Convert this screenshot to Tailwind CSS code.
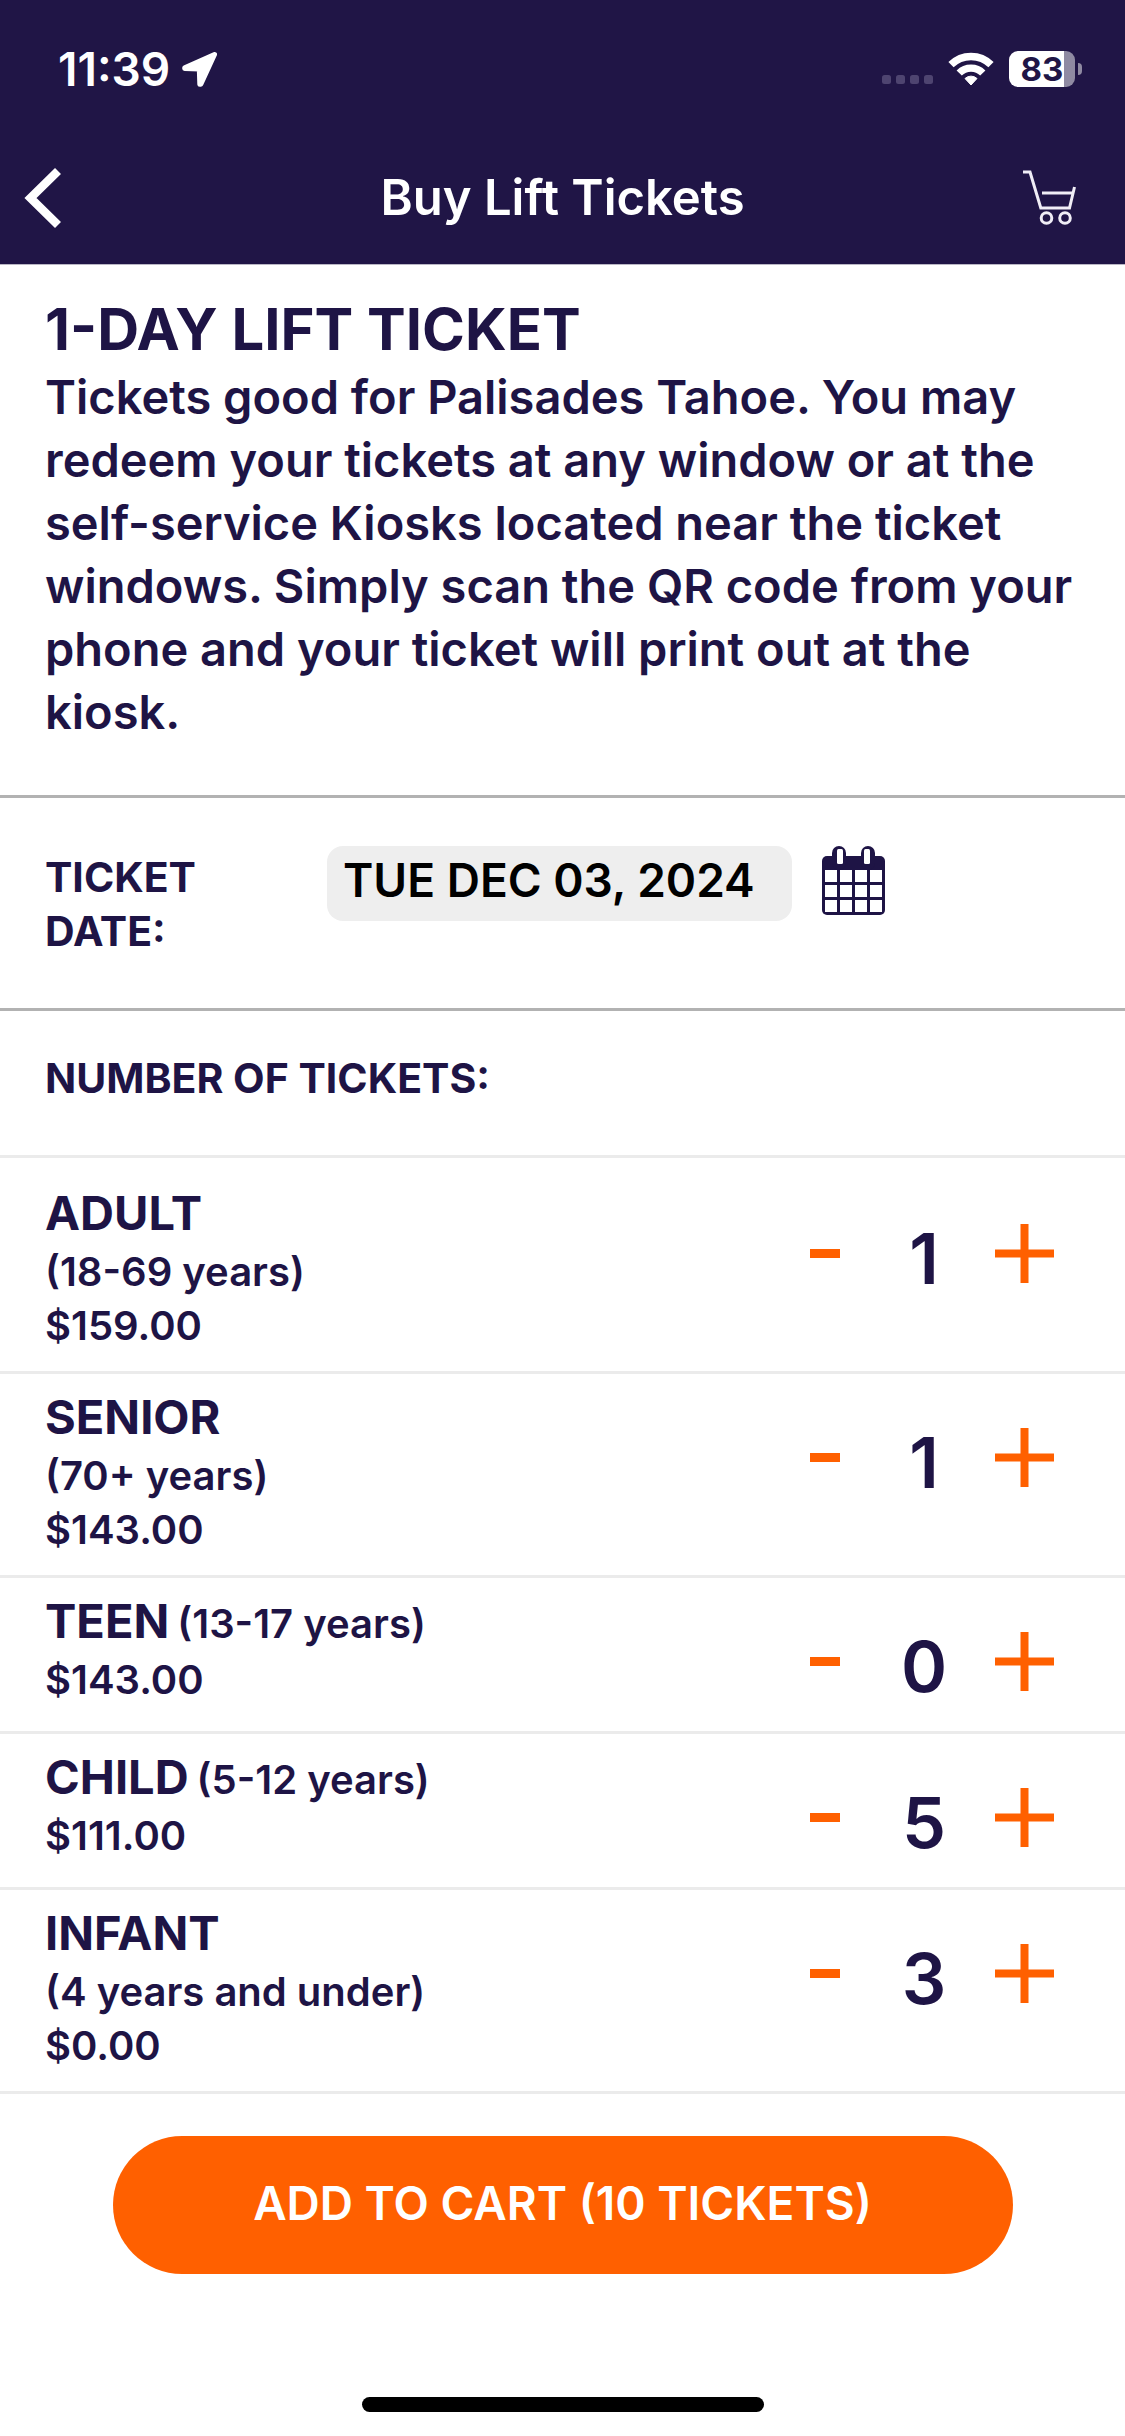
<!DOCTYPE html>
<html lang="en">
<head>
<meta charset="utf-8">
<meta name="viewport" content="width=device-width, initial-scale=1">
<title>Buy Lift Tickets</title>
<script src="https://cdn.jsdelivr.net/npm/@tailwindcss/browser@4"></script>
</head>
<body class="flex min-h-screen flex-col bg-white font-['Inter',sans-serif] font-semibold text-[#1e1445]">
  <header class="border-b border-[#b9b6c4] bg-[#201546] text-white">
    <div class="flex h-[132px] items-center justify-between pt-[6px] pr-[43px] pl-[58px]">
      <div class="flex items-center gap-3">
        <span class="text-[46px] leading-[60px]">11:39</span>
        <svg class="h-[35px] w-[35px]" viewBox="0 0 35 35" fill="#fff" stroke="#fff" stroke-width="5" stroke-linejoin="round" aria-hidden="true"><path d="M32.5 2.5 L2.7 15.8 L2.7 16.5 L17.3 17 L17.8 32.3 L18.8 32.3 Z"/></svg>
      </div>
      <div class="flex items-center">
        <svg class="mt-[21px] mr-[15px] h-[9px] w-[51px]" viewBox="0 0 51 9" fill="#4e4470" aria-hidden="true"><rect width="9" height="9" rx="2.5"/><rect x="14" width="9" height="9" rx="2.5"/><rect x="28" width="9" height="9" rx="2.5"/><rect x="42" width="9" height="9" rx="2.5"/></svg>
        <svg class="mr-[15px] h-[34px] w-[46px]" viewBox="0 0 46 34" fill="none" stroke="#fff" stroke-width="7.4" aria-hidden="true"><path d="M3 12.7 A28.4 28.4 0 0 1 43 12.7"/><path d="M11.2 21 A16.7 16.7 0 0 1 34.8 21"/><path d="M17 26.5 A8.8 8.8 0 0 1 29 26.5 L23 33 Z" fill="#fff" stroke="#fff" stroke-width="1" stroke-linejoin="round"/></svg>
        <div class="flex items-center gap-[3px]">
          <div class="flex h-9 w-[66px] items-center justify-center rounded-[9px] bg-linear-to-r from-white from-84% to-[#8f8aa2] to-84% text-[33px] leading-9 font-bold text-[#201546]"><span>83</span></div>
          <div class="h-3 w-1 rounded-r-full bg-[#8f8aa2]"></div>
        </div>
      </div>
    </div>
    <div class="grid h-[132px] grid-cols-[1fr_auto_1fr] items-center">
      <button type="button" aria-label="Back" class="justify-self-start pl-6">
        <svg class="h-[62px] w-[38px]" viewBox="0 0 38 62" fill="none" stroke="#fff" stroke-width="8.5" aria-hidden="true"><path d="M34 4 L6.5 31 L34 58"/></svg>
      </button>
      <h1 class="text-[49px] leading-[60px]">Buy Lift Tickets</h1>
      <button type="button" aria-label="Cart" class="justify-self-end pr-12">
        <svg class="h-14 w-[54px]" viewBox="0 0 54 56" fill="none" stroke="#f0edf6" stroke-width="3" aria-hidden="true"><path d="M0 2 H7 L17.8 38 H46.5 L51.5 17"/><path d="M19 23 H49.5"/><circle cx="23.5" cy="48" r="5.3"/><circle cx="42" cy="48" r="5.3"/></svg>
      </button>
    </div>
  </header>

  <main>
    <section class="border-b-3 border-[#b2b2b2] px-[45px] pt-7 pb-[52px]">
      <h2 class="text-[58px] leading-[72px] font-bold">1-DAY LIFT TICKET</h2>
      <p class="text-[47px] leading-[63px]">Tickets good for Palisades Tahoe. You may redeem your tickets at any window or at the self-service Kiosks located near the ticket windows. Simply scan the QR code from your phone and your ticket will print out at the kiosk.</p>
    </section>

    <section class="flex items-start border-b-3 border-[#b2b2b2] px-[45px] pt-12 pb-[50px]">
      <label for="date" class="w-[282px] shrink-0 pt-1 pr-8 text-[41px] leading-[54px] font-bold">TICKET DATE:</label>
      <button id="date" type="button" class="w-[465px] rounded-2xl bg-[#eeeeee] px-4 pb-[6px] text-left text-[46px] leading-[69px] whitespace-nowrap text-black">TUE DEC 03, 2024</button>
      <button type="button" aria-label="Open calendar" class="ml-[30px]">
        <svg class="h-[69px] w-[63px]" viewBox="0 0 63 69" aria-hidden="true">
          <g fill="#1e1445"><rect y="10" width="63" height="59" rx="5"/><rect x="10" width="14" height="24" rx="7"/><rect x="39" width="14" height="24" rx="7"/></g>
          <g fill="#fff"><rect x="15" y="3" width="6" height="15" rx="1.5"/><rect x="42" y="3" width="6" height="15" rx="1.5"/>
          <path d="M3 24h12v12H3zM18 24h12v12H18zM33 24h12v12H33zM48 24h12v12H48zM3 39h12v12H3zM18 39h12v12H18zM33 39h12v12H33zM48 39h12v12H48zM3 54h12v12H3zM18 54h12v12H18zM33 54h12v12H33zM48 54h12v12H48z"/></g>
        </svg>
      </button>
    </section>

    <h2 class="border-b-3 border-[#ebebeb] px-[45px] pt-10 pb-[50px] text-[41px] leading-[54px] font-bold">NUMBER OF TICKETS:</h2>

    <ul>
      <li class="flex min-h-[156px] items-start justify-between border-b-3 border-[#ebebeb] pt-3 pr-[71px] pb-[18px] pl-[45px]">
        <div class="w-[396px] pt-[11px] text-[40px] leading-[54px]">
          <div class="flex flex-wrap items-baseline gap-x-2"><h3 class="text-[47px] leading-[64px] font-bold">ADULT</h3><span>(18-69 years)</span></div>
          <p>$159.00</p>
        </div>
        <div class="flex items-start pt-[54px]">
          <button type="button" aria-label="Remove adult"><svg class="h-[59px] w-[30px]" viewBox="0 0 30 59" fill="#ff6000"><rect y="25" width="30" height="9"/></svg></button>
          <output class="w-[155px] pl-[13px] text-center text-[70px] leading-[69px]">1</output>
          <button type="button" aria-label="Add adult"><svg class="size-[59px]" viewBox="0 0 59 59" fill="#ff6000"><path d="M25.5 0h8v25.5H59v8H33.5V59h-8V33.5H0v-8h25.5z"/></svg></button>
        </div>
      </li>
      <li class="flex min-h-[156px] items-start justify-between border-b-3 border-[#ebebeb] pr-[71px] pb-[18px] pl-[45px]">
        <div class="w-[396px] pt-[11px] text-[40px] leading-[54px]">
          <div class="flex flex-wrap items-baseline gap-x-2"><h3 class="text-[47px] leading-[64px] font-bold">SENIOR</h3><span>(70+ years)</span></div>
          <p>$143.00</p>
        </div>
        <div class="flex items-start pt-[54px]">
          <button type="button" aria-label="Remove senior"><svg class="h-[59px] w-[30px]" viewBox="0 0 30 59" fill="#ff6000"><rect y="25" width="30" height="9"/></svg></button>
          <output class="w-[155px] pl-[13px] text-center text-[70px] leading-[69px]">1</output>
          <button type="button" aria-label="Add senior"><svg class="size-[59px]" viewBox="0 0 59 59" fill="#ff6000"><path d="M25.5 0h8v25.5H59v8H33.5V59h-8V33.5H0v-8h25.5z"/></svg></button>
        </div>
      </li>
      <li class="flex min-h-[156px] items-start justify-between border-b-3 border-[#ebebeb] pr-[71px] pb-[18px] pl-[45px]">
        <div class="w-[396px] pt-[11px] text-[40px] leading-[54px]">
          <div class="flex flex-wrap items-baseline gap-x-2"><h3 class="text-[47px] leading-[64px] font-bold">TEEN</h3><span>(13-17 years)</span></div>
          <p>$143.00</p>
        </div>
        <div class="flex items-start pt-[54px]">
          <button type="button" aria-label="Remove teen"><svg class="h-[59px] w-[30px]" viewBox="0 0 30 59" fill="#ff6000"><rect y="25" width="30" height="9"/></svg></button>
          <output class="w-[155px] pl-[13px] text-center text-[70px] leading-[69px]">0</output>
          <button type="button" aria-label="Add teen"><svg class="size-[59px]" viewBox="0 0 59 59" fill="#ff6000"><path d="M25.5 0h8v25.5H59v8H33.5V59h-8V33.5H0v-8h25.5z"/></svg></button>
        </div>
      </li>
      <li class="flex min-h-[156px] items-start justify-between border-b-3 border-[#ebebeb] pr-[71px] pb-[18px] pl-[45px]">
        <div class="w-[396px] pt-[11px] text-[40px] leading-[54px]">
          <div class="flex flex-wrap items-baseline gap-x-2"><h3 class="text-[47px] leading-[64px] font-bold">CHILD</h3><span>(5-12 years)</span></div>
          <p>$111.00</p>
        </div>
        <div class="flex items-start pt-[54px]">
          <button type="button" aria-label="Remove child"><svg class="h-[59px] w-[30px]" viewBox="0 0 30 59" fill="#ff6000"><rect y="25" width="30" height="9"/></svg></button>
          <output class="w-[155px] pl-[13px] text-center text-[70px] leading-[69px]">5</output>
          <button type="button" aria-label="Add child"><svg class="size-[59px]" viewBox="0 0 59 59" fill="#ff6000"><path d="M25.5 0h8v25.5H59v8H33.5V59h-8V33.5H0v-8h25.5z"/></svg></button>
        </div>
      </li>
      <li class="flex min-h-[156px] items-start justify-between border-b-3 border-[#ebebeb] pr-[71px] pb-[18px] pl-[45px]">
        <div class="w-[396px] pt-[11px] text-[40px] leading-[54px]">
          <div class="flex flex-wrap items-baseline gap-x-2"><h3 class="text-[47px] leading-[64px] font-bold">INFANT</h3><span>(4 years and under)</span></div>
          <p>$0.00</p>
        </div>
        <div class="flex items-start pt-[54px]">
          <button type="button" aria-label="Remove infant"><svg class="h-[59px] w-[30px]" viewBox="0 0 30 59" fill="#ff6000"><rect y="25" width="30" height="9"/></svg></button>
          <output class="w-[155px] pl-[13px] text-center text-[70px] leading-[69px]">3</output>
          <button type="button" aria-label="Add infant"><svg class="size-[59px]" viewBox="0 0 59 59" fill="#ff6000"><path d="M25.5 0h8v25.5H59v8H33.5V59h-8V33.5H0v-8h25.5z"/></svg></button>
        </div>
      </li>
    </ul>

    <div class="flex justify-center pt-[42px]">
      <button type="button" class="w-4/5 rounded-full bg-[#ff6000] pt-9 pb-[39px] text-[46px] leading-[63px] text-white">ADD TO CART (10 TICKETS)</button>
    </div>
  </main>

  <div class="mt-auto flex justify-center pt-6 pb-6">
    <div class="h-[15px] w-[402px] rounded-full bg-black"></div>
  </div>
</body>
</html>
